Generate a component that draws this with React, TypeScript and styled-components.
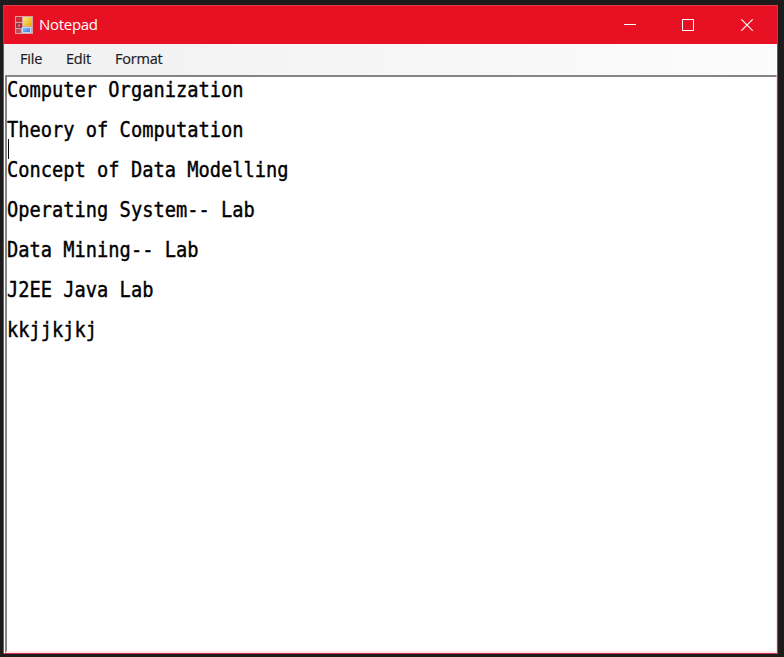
import React from "react";
import styled, { createGlobalStyle } from "styled-components";

const GlobalStyle = createGlobalStyle`
  * { box-sizing: border-box; }
  html, body { margin: 0; background: #1d1b1c; overflow: hidden; }
`;

const Desktop = styled.main`
  width: 784px;
  height: 657px;
  padding: 5px 6px 3px 3px;
  background: #1d1b1c;
`;

const Window = styled.section`
  height: 649px;
  display: flex;
  flex-direction: column;
  border: 1px solid #c8324f;
  border-top-color: #e03a48;
  background: #fff;
`;

const TitleBar = styled.header`
  flex: 0 0 38px;
  display: flex;
  align-items: center;
  padding-left: 11px;
  background: #e81123;
  color: #fff;
`;

const Title = styled.h1`
  flex: 1;
  margin: 0 0 2px 6px;
  font: 400 15px/20px "Open Sans", sans-serif;
  letter-spacing: -0.3px;
`;

const WindowButton = styled.button<{ $width: number }>`
  width: ${(p) => p.$width}px;
  height: 38px;
  padding: 0;
  border: 0;
  display: flex;
  align-items: center;
  justify-content: center;
  background: transparent;
`;

const MenuBar = styled.nav`
  flex: 0 0 31px;
  display: flex;
  align-items: center;
  gap: 23px;
  padding: 0 0 1px 16px;
  background: linear-gradient(90deg, #f0f0f0, #fcfcfc);
`;

const MenuItem = styled.span<{ $width: number }>`
  width: ${(p) => p.$width}px;
  white-space: nowrap;
  font: 400 14.5px/20px "Open Sans", sans-serif;
  letter-spacing: -0.2px;
  color: #1c1c24;
  -webkit-text-stroke: 0.2px #1c1c24;
`;

const Editor = styled.div`
  flex: 1;
  margin-left: 1px;
  padding: 2px 0 0 0;
  border: 2px solid #858585;
  border-right: 1px solid #ffdfe4;
  border-bottom: 2px solid #ffe6e8;
  background: #fff;
`;

const Line = styled.div`
  height: 20px;
  font: 400 20.5px/22px "DejaVu Sans Mono", monospace;
  white-space: pre;
  color: #000;
  -webkit-text-stroke: 0.4px #000;
  transform: scaleX(0.9125);
  transform-origin: left;
`;

const Caret = styled.div`
  width: 1px;
  height: 20px;
  margin-left: 1px;
  background: #000;
`;

const lines = [
  "Computer Organization", "", "Theory of Computation", null,
  "Concept of Data Modelling", "", "Operating System-- Lab", "",
  "Data Mining-- Lab", "", "J2EE Java Lab", "", "kkjjkjkj",
];

const FormIcon = () => (
  <svg width="18" height="18" viewBox="0 0 18 18">
    <defs>
      <linearGradient id="gold" x2="1" y2="1">
        <stop stopColor="#ffe98a" /><stop offset="1" stopColor="#e8a900" />
      </linearGradient>
      <linearGradient id="blue" x2="1" y2="1">
        <stop stopColor="#8fc4ff" /><stop offset="1" stopColor="#2f78df" />
      </linearGradient>
    </defs>
    <path d="M0 0h18v18H0z" fill="#d9a3a5" />
    <path d="M1 1h6v5H1z" fill="#c9303c" />
    <path d="M8 1h9v9H8z" fill="url(#gold)" />
    <path d="M1.5 7.5h5v4h-5z" fill="#b52d35" stroke="#883b41" />
    <path d="M3 8.5h2v2H3z" fill="#ef7778" />
    <path d="M1 13h5v4H1z" fill="#bd5060" />
    <path d="M7.5 11.5h8v5h-8z" fill="url(#blue)" stroke="#c4d9f2" />
  </svg>
);

export default function App() {
  return (
    <Desktop>
      <GlobalStyle />
      <Window>
        <TitleBar>
          <FormIcon />
          <Title>Notepad</Title>
          <WindowButton $width={58} aria-label="Minimize">
            <svg width="12" height="12"><path d="M0 5.5h12" stroke="#fff" /></svg>
          </WindowButton>
          <WindowButton $width={58} aria-label="Maximize">
            <svg width="12" height="12"><path d="M.5.5h11v11H.5z" fill="none" stroke="#fff" /></svg>
          </WindowButton>
          <WindowButton $width={60} aria-label="Close">
            <svg width="12" height="12"><path d="m.3.3 11.4 11.4M11.7.3.3 11.7" stroke="#fff" strokeWidth="1.1" /></svg>
          </WindowButton>
        </TitleBar>
        <MenuBar>
          <MenuItem $width={23}>File</MenuItem>
          <MenuItem $width={26}>Edit</MenuItem>
          <MenuItem $width={50}>Format</MenuItem>
        </MenuBar>
        <Editor>
          {lines.map((text, i) => text === null ? <Caret key={i} /> : <Line key={i}>{text}</Line>)}
        </Editor>
      </Window>
    </Desktop>
  );
}
